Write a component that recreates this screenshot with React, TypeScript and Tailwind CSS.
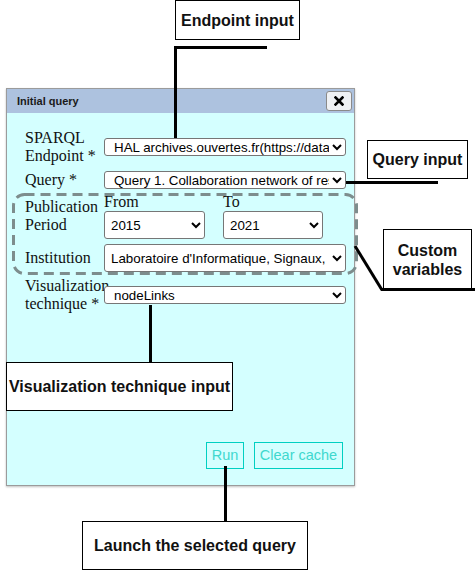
import type { ReactNode } from 'react'

const SANS = "font-['Liberation_Sans',Arial,sans-serif]"
const SERIF = "font-['Liberation_Serif','Times_New_Roman',serif]"

const ENDPOINTS = ['HAL archives.ouvertes.fr(https://data.archives-ouvertes.fr/sparql)']
const QUERIES = ['Query 1. Collaboration network of researchers from a laboratory']
const YEARS = ['2013', '2014', '2015', '2016', '2017', '2018', '2019', '2020', '2021', '2022']
const INSTITUTIONS = ["Laboratoire d'Informatique, Signaux, et Systèmes de Sophia-Antipolis (I3S)"]
const TECHNIQUES = ['nodeLinks', 'matrix', 'timeline']

function Select({ options, value, className }: { options: string[]; value: string; className: string }) {
  return (
    <select
      defaultValue={value}
      className={`${SANS} relative z-10 bg-white text-[13.333px] text-black border border-[#767676] rounded-[3px] ${className}`}
    >
      {options.map((o) => (
        <option key={o}>{o}</option>
      ))}
    </select>
  )
}

function Row({ label, children, className }: { label: ReactNode; children: ReactNode; className: string }) {
  return (
    <div className={`flex items-center ${className}`}>
      <div className={`${SERIF} w-[79px] shrink-0 text-[16px] leading-[18px] text-[#111] whitespace-nowrap`}>{label}</div>
      {children}
    </div>
  )
}

function Note({ children, className }: { children: ReactNode; className: string }) {
  return (
    <div
      className={`${SANS} absolute z-20 flex items-center justify-center bg-white border border-black text-[16px] font-bold text-[#111] text-center leading-[19px] ${className}`}
    >
      {children}
    </div>
  )
}

export default function App() {
  return (
    <div className="relative w-[475px] h-[570px] bg-white overflow-hidden">
      <div className="pt-[88px] pl-[6px]">
        <div className="w-[349px] h-[398px] flex flex-col border border-[#9b9b9b] bg-[#d4ffff] shadow-[0_1px_2px_rgba(0,0,0,0.25)]">
          <div className="h-[24px] shrink-0 flex items-center justify-between pl-[10px] pr-[2px] bg-[#adc2df]">
            <span className={`${SANS} text-[11px] font-bold text-[#1a1a1a]`}>Initial query</span>
            <button className="w-[26px] h-[20px] flex items-center justify-center bg-[#eff1f4] border border-[#8a8a8a] rounded-[3px]">
              <svg width="10" height="10" viewBox="0 0 10 10">
                <path d="M1.5 1.5 L8.5 8.5 M8.5 1.5 L1.5 8.5" stroke="#000" strokeWidth="2.6" strokeLinecap="square" />
              </svg>
            </button>
          </div>

          <div className="flex-1 flex flex-col pl-[18px] pr-[7px] pt-[15px] pb-[16px]">
            <Row label={<>SPARQL<br />Endpoint *</>} className="h-[38px]">
              <Select options={ENDPOINTS} value={ENDPOINTS[0]} className="w-[242px] h-[18px] pl-[5px]" />
            </Row>
            <Row label="Query *" className="h-[20px] mt-[4px]">
              <Select options={QUERIES} value={QUERIES[0]} className="w-[242px] h-[18px] pl-[5px]" />
            </Row>
            <Row label={<>Publication<br />Period</>} className="h-[46px] mt-[3px]">
              <div className="flex gap-[18px]">
                <div className="flex flex-col">
                  <span className={`${SERIF} text-[16px] leading-[18px] text-[#111]`}>From</span>
                  <Select options={YEARS} value="2015" className="w-[101px] h-[28px] pl-[2px]" />
                </div>
                <div className="flex flex-col">
                  <span className={`${SERIF} text-[16px] leading-[18px] text-[#111]`}>To</span>
                  <Select options={YEARS} value="2021" className="w-[100px] h-[28px] pl-[2px]" />
                </div>
              </div>
            </Row>
            <Row label="Institution" className="h-[28px] mt-[5px]">
              <Select options={INSTITUTIONS} value={INSTITUTIONS[0]} className="w-[242px] h-[28px] pl-[2px]" />
            </Row>
            <Row label={<>Visualization<br />technique *</>} className="h-[36px] mt-[5px]">
              <Select options={TECHNIQUES} value="nodeLinks" className="w-[242px] h-[18px] pl-[5px]" />
            </Row>

            <div className="mt-auto flex justify-end gap-[10px] pr-[4px]">
              <button className={`${SANS} w-[38px] h-[27px] text-[14.5px] text-[#3fd8ce] border border-[#00d0c2]`}>Run</button>
              <button className={`${SANS} w-[89px] h-[27px] text-[14.5px] text-[#3fd8ce] border border-[#00d0c2]`}>Clear cache</button>
            </div>
          </div>
        </div>
      </div>

      {/* custom variables frame */}
      <svg className="absolute left-[12px] top-[193px] z-20" width="346" height="82" viewBox="0 0 346 82">
        <rect x="1.5" y="1.5" width="343" height="79" rx="11" fill="none" stroke="#7d8d8d" strokeWidth="3" strokeDasharray="10 6" />
      </svg>

      {/* annotation lines */}
      <div className="absolute left-[174px] top-[46px] w-[93px] h-[3px] bg-black" />
      <div className="absolute left-[174px] top-[46px] w-[3px] h-[93px] bg-black" />
      <div className="absolute left-[346px] top-[181px] w-[92px] h-[3px] bg-black" />
      <svg className="absolute left-[350px] top-[240px] z-20" width="40" height="55" viewBox="0 0 40 55">
        <path d="M5 6 L32 50" stroke="#000" strokeWidth="3" />
      </svg>
      <div className="absolute left-[381px] top-[288px] w-[94px] h-[3px] bg-black z-30" />
      <div className="absolute left-[149px] top-[305px] w-[3px] h-[57px] bg-black z-20" />
      <div className="absolute left-[224px] top-[466px] w-[3px] h-[56px] bg-black z-20" />

      <Note className="left-[175px] top-0 w-[125px] h-[40px]">Endpoint input</Note>
      <Note className="left-[367px] top-[140px] w-[101px] h-[39px]">Query input</Note>
      <Note className="left-[383px] top-[229px] w-[89px] h-[61px]">Custom<br />variables</Note>
      <Note className="left-[6px] top-[362px] w-[227px] h-[49px]">Visualization technique input</Note>
      <Note className="left-[82px] top-[521px] w-[226px] h-[49px]">Launch the selected query</Note>
    </div>
  )
}
